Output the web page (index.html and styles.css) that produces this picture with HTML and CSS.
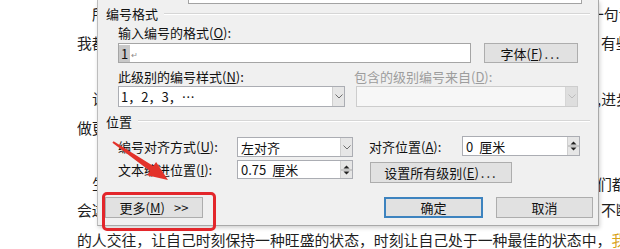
FILE: index.html
```html
<!DOCTYPE html>
<html lang="zh-CN">
<head>
<meta charset="utf-8">
<link rel="stylesheet" href="styles.css">
</head>
<body>
<div class="doc">
  <div class="line"><span class="l indent">所以我们在生活中一定要记住这样</span><span class="r pull12">一句话</span></div>
  <div class="line"><span class="l">我都会告诉自己要坚持下去</span><span class="r">有些</span></div>
  <div class="line"></div>
  <div class="line"><span class="l indent">让自己每天都有所收获</span><span class="r pull4">,进步</span></div>
  <div class="line"><span class="l">做更好的自己</span><span class="r"></span></div>
  <div class="line"></div>
  <div class="line"><span class="l indent">生活中的我们</span><span class="r pull4">们都</span></div>
  <div class="line"><span class="l">会这样去做</span><span class="r">不断</span></div>
  <div class="line"><span class="full">的人交往，让自己时刻保持一种旺盛的状态，时刻让自己处于一种最佳的状态中，<span class="hl">我</span></span></div>
</div>

<div class="dialog">
  <div class="preview"></div>
  <div class="group-head"><span>编号格式</span><i class="rule"></i></div>
  <div class="field-label">输入编号的格式(<u>O</u>):</div>
  <div class="format-row">
    <div class="textbox"><span class="sel">1</span><span class="para">↵</span></div>
    <div class="btn font-btn">字体(<u>F</u>)<span class="dots">...</span></div>
  </div>
  <div class="pair labels">
    <span>此级别的编号样式(<u>N</u>):</span>
    <span class="disabled">包含的级别编号来自(<u>D</u>):</span>
  </div>
  <div class="pair selects">
    <div class="combo"><span class="val">1，2，3，…</span><span class="drop"><svg width="8" height="5" viewBox="0 0 8 5"><path d="M0.5 0.5L4 4L7.5 0.5" fill="none" stroke="#6d6d6d"/></svg></span></div>
    <div class="combo off"><span class="val"></span><span class="drop"><svg width="8" height="5" viewBox="0 0 8 5"><path d="M0.5 0.5L4 4L7.5 0.5" fill="none" stroke="#bcbcbc"/></svg></span></div>
  </div>
  <div class="group-head pos-head"><span>位置</span><i class="rule"></i></div>
  <div class="pos-grid">
    <span class="lbl">编号对齐方式(<u>U</u>):</span>
    <div class="combo short"><span class="val">左对齐</span><span class="drop"><svg width="8" height="5" viewBox="0 0 8 5"><path d="M0.5 0.5L4 4L7.5 0.5" fill="none" stroke="#6d6d6d"/></svg></span></div>
    <span class="lbl at-lbl">对齐位置(<u>A</u>):</span>
    <div class="spin at-spin"><span class="val">0&nbsp;厘米</span><span class="spinbtn"><svg width="11" height="14" viewBox="0 0 11 14"><path d="M2.5 5.5L5.5 2.5L8.5 5.5Z" fill="#222"/><path d="M0 7H11" stroke="#a8a8a8"/><path d="M2.5 8.5L8.5 8.5L5.5 11.5Z" fill="#222"/></svg></span></div>
    <span class="lbl row2">文本缩进位置(<u>I</u>):</span>
    <div class="spin indent-spin"><span class="val">0.75&nbsp;厘米</span><span class="spinbtn"><svg width="11" height="14" viewBox="0 0 11 14"><path d="M2.5 5.5L5.5 2.5L8.5 5.5Z" fill="#222"/><path d="M0 7H11" stroke="#a8a8a8"/><path d="M2.5 8.5L8.5 8.5L5.5 11.5Z" fill="#222"/></svg></span></div>
    <div class="btn all-btn">设置所有级别(<u>E</u>)<span class="dots">...</span></div>
  </div>
  <div class="actions">
    <div class="btn more">更多(<u>M</u>)<span class="chev">&gt;&gt;</span></div>
    <div class="btn ok">确定</div>
    <div class="btn cancel">取消</div>
  </div>
</div>

<div class="callout"></div>
<svg class="arrow" width="75" height="60" viewBox="0 0 75 60"><polygon points="13.6,11.2 53.3,36.1 56.1,32 68,50 47.1,45.2 49.9,41.1 12.4,12.8" fill="#e3322a"/></svg>
</body>
</html>
```
FILE: styles.css
```css
* { box-sizing: border-box; }
html, body { margin: 0; }
body {
  width: 620px;
  height: 249px;
  overflow: hidden;
  position: relative;
  background: #fff;
  font-family: "Noto Sans CJK SC", sans-serif;
}

/* background document */
.doc {
  display: grid;
  grid-template-rows: 30px 28px 28px 28px 30px 27px 28px 24px 36px;
  padding-left: 77px;
  margin-top: -1px;
  font-size: 14.85px;
  color: #1e1e1e;
}
.line {
  display: grid;
  grid-template-columns: 524px 200px;
  align-items: center;
  white-space: nowrap;
  line-height: 20px;
}
.line .l { overflow: hidden; }
.indent { padding-left: 15px; }
.pull4 { margin-left: -4px; }
.pull12 { margin-left: -12px; }
.full { grid-column: 1 / -1; }
.hl { color: #d9a21b; }

/* dialog */
.dialog {
  position: absolute;
  left: 97px;
  top: 0;
  width: 502px;
  height: 226px;
  background: #f0f0f0;
  border-left: 1px solid #bdbdbd;
  border-right: 1px solid #a9a9a9;
  border-bottom: 1px solid #a9a9a9;
  box-shadow: 1px 2px 4px rgba(0, 0, 0, 0.18);
  font-size: 13px;
  color: #111;
  display: flex;
  flex-direction: column;
}
.preview {
  margin-left: 90px;
  width: 394px;
  height: 4px;
  background: #fff;
  border: 1px solid #a3a3a3;
  border-top: 0;
}
.group-head {
  display: flex;
  align-items: center;
  height: 19px;
  line-height: 19px;
  padding: 0 8px;
}
.group-head .rule {
  flex: 1;
  margin-left: 6px;
  height: 2px;
  border-top: 1px solid #d6d6d6;
  border-bottom: 1px solid #fff;
}
.pos-head { height: 28px; }
.field-label {
  padding-left: 20px;
  height: 20px;
  line-height: 20px;
}
.format-row {
  display: flex;
  gap: 13px;
  padding-left: 20px;
  height: 20px;
}
.textbox {
  width: 353px;
  height: 20px;
  background: #fff;
  border: 1px solid #a5a5a5;
  display: flex;
  align-items: center;
}
.sel {
  background: #c8c8c8;
  height: 17px;
  line-height: 17px;
  padding: 0 2px;
}
.para {
  font-family: "DejaVu Sans", sans-serif;
  font-size: 8px;
  color: #8c8c8c;
  margin-left: 1px;
  margin-top: 4px;
}
.btn {
  display: flex;
  align-items: center;
  justify-content: center;
  background: #e1e1e1;
  border: 1px solid #adadad;
  white-space: nowrap;
}
.dots { letter-spacing: 2px; margin-left: 2px; }
.font-btn { width: 94px; }
.pair {
  display: grid;
  grid-template-columns: 227px 222px;
  column-gap: 11px;
  padding-left: 20px;
}
.labels {
  padding-top: 5px;
  height: 23px;
  line-height: 18px;
}
.labels .disabled { margin-left: -2px; color: #9d9d9d; }
.selects { height: 21px; }
.combo, .spin {
  display: flex;
  background: #fff;
  border: 1px solid #abadb3;
  height: 21px;
}
.val {
  flex: 1;
  display: flex;
  align-items: center;
  padding-left: 2px;
  white-space: nowrap;
  word-spacing: 3px;
}
.drop, .spinbtn {
  width: 12px;
  background: #e6e6e6;
  border-left: 1px solid #cfcfcf;
  display: flex;
  align-items: center;
  justify-content: center;
}
.combo.off { border-color: #cdcdcd; background: #f7f7f7; }
.combo.off .drop { background: #dedede; border-left-color: #d6d6d6; }

.pos-grid {
  display: grid;
  grid-template-columns: 119px 116px 16px 93px 118px;
  grid-template-rows: 21px 23px;
  row-gap: 3px;
  margin-top: 1px;
  padding-left: 20px;
}
.lbl { line-height: 21px; white-space: nowrap; }
.pos-grid .row2 { grid-row: 2; grid-column: 1; line-height: 19px; }
.short { grid-row: 1; grid-column: 2; height: 20px; align-self: end; }
.short .val { padding-left: 3px; }
.at-lbl { grid-row: 1; grid-column: 4; }
.at-spin { grid-row: 1; grid-column: 5; height: 20px; align-self: start; }
.indent-spin { grid-row: 2; grid-column: 2; height: 19px; align-self: start; }
.spin .val { padding-left: 3px; }
.all-btn {
  grid-row: 2;
  grid-column: 4 / 6;
  width: 142px;
  height: 21px;
  margin-left: 1px;
  align-self: end;
}
.actions {
  display: flex;
  gap: 13px;
  padding: 0 5px 0 7px;
  margin-top: 14px;
  height: 21px;
}
.more { width: 98px; margin-right: auto; }
.chev { margin-left: 9px; }
.ok { width: 99px; border: 2px solid #3d83bf; }
.cancel { width: 97px; }

/* annotations */
.callout {
  position: absolute;
  left: 102px;
  top: 192px;
  width: 114px;
  height: 39px;
  border: 3px solid #e3262b;
  border-radius: 5px;
}
.arrow {
  position: absolute;
  left: 100px;
  top: 130px;
}
```
